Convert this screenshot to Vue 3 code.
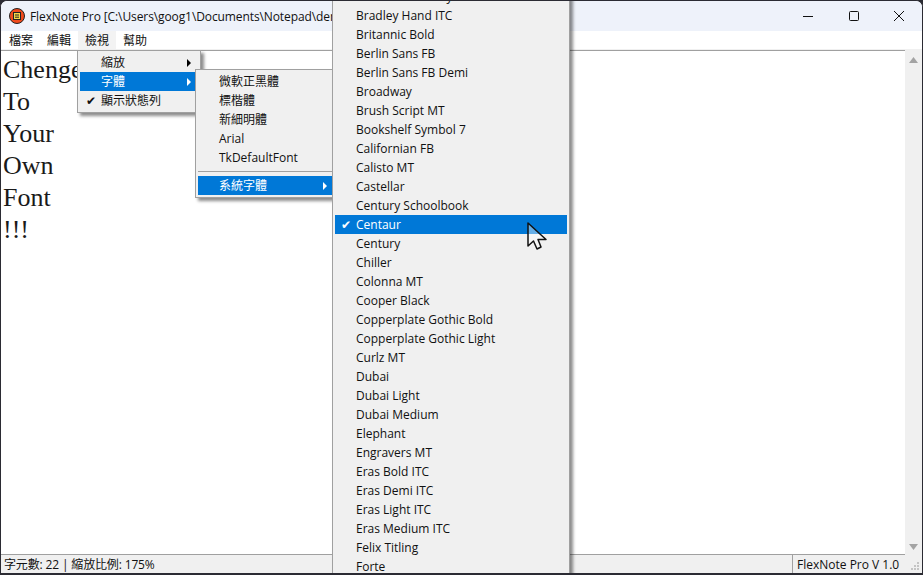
<script setup>
const menus = ['檔案', '編輯', '檢視', '幫助']
const lines = ['Chenge', 'To', 'Your', 'Own', 'Font', '!!!']
const subFonts = ['微軟正黑體', '標楷體', '新細明體', 'Arial', 'TkDefaultFont']
const fonts = ['Bookman Old Style', 'Bradley Hand ITC', 'Britannic Bold', 'Berlin Sans FB', 'Berlin Sans FB Demi', 'Broadway', 'Brush Script MT', 'Bookshelf Symbol 7', 'Californian FB', 'Calisto MT', 'Castellar', 'Century Schoolbook', 'Centaur', 'Century', 'Chiller', 'Colonna MT', 'Cooper Black', 'Copperplate Gothic Bold', 'Copperplate Gothic Light', 'Curlz MT', 'Dubai', 'Dubai Light', 'Dubai Medium', 'Elephant', 'Engravers MT', 'Eras Bold ITC', 'Eras Demi ITC', 'Eras Light ITC', 'Eras Medium ITC', 'Felix Titling', 'Forte']
</script>

<template>
  <div class="win">
    <header class="title">
      <svg class="logo" width="16" height="16" viewBox="0 0 16 16">
        <circle cx="8" cy="8" r="7.500" fill="#f04a1c" stroke="#222" />
        <rect x="4.500" y="4.500" width="7" height="7" fill="#f6d84a" stroke="#222" />
        <path d="M6 7h4M6 9.200h4" stroke="#222" />
      </svg>
      <span class="title-text">FlexNote Pro [C:\Users\goog1\Documents\Notepad\demo.txt]</span>
      <div class="caps">
        <svg width="12" height="12" viewBox="0 0 12 12"><path d="M1 6.500h10" stroke="#111" /></svg>
        <svg width="12" height="12" viewBox="0 0 12 12"><rect x="1.500" y="1.500" width="9" height="9" rx="1" fill="none" stroke="#111" /></svg>
        <svg width="12" height="12" viewBox="0 0 12 12"><path d="M1 1l10 10M11 1L1 11" stroke="#111" /></svg>
      </div>
    </header>
    <nav class="menubar">
      <span v-for="(m, i) in menus" :key="m" class="top" :class="{ open: i === 2 }">{{ m }}</span>
    </nav>
    <main class="body">
      <div class="editor">
        <div v-for="l in lines" :key="l" class="line">{{ l }}</div>
      </div>
      <div class="scroll">
        <svg width="9" height="6" viewBox="0 0 9 6"><path d="M4.500 0L9 6H0z" fill="#a3a3a3" /></svg>
        <svg width="9" height="6" viewBox="0 0 9 6"><path d="M0 0h9L4.500 6z" fill="#a3a3a3" /></svg>
      </div>
    </main>
    <footer class="status">
      <span class="stat-left">字元數: 22 | 縮放比例: 175%</span>
      <span class="stat-right">FlexNote Pro V 1.0</span>
      <svg class="grip" width="17" height="18" viewBox="0 0 17 18">
        <path d="M12 8h2v2h-2zM9 11h2v2H9zM12 11h2v2h-2zM6 14h2v2H6zM9 14h2v2H9zM12 14h2v2h-2z" fill="#c4c4c4" />
      </svg>
    </footer>

    <div class="menu view-menu">
      <div class="item"><span class="label">縮放</span><i class="arrow"></i></div>
      <div class="item hot"><span class="label">字體</span><i class="arrow"></i></div>
      <div class="item"><span class="check">✔</span><span class="label">顯示狀態列</span></div>
    </div>
    <div class="menu font-menu">
      <div v-for="f in subFonts" :key="f" class="item"><span class="label">{{ f }}</span></div>
      <div class="sep"></div>
      <div class="item hot"><span class="label">系統字體</span><i class="arrow"></i></div>
    </div>
    <div class="menu sys-menu">
      <div v-for="f in fonts" :key="f" class="item" :class="{ hot: f === 'Centaur' }">
        <span v-if="f === 'Centaur'" class="check">✔</span>
        <span class="label">{{ f }}</span>
      </div>
    </div>
    <svg class="cursor" width="22" height="30" viewBox="0 0 22 30">
      <path d="M2 2V25L7.500 20L11 28L15 26L12 18.500H20Z" fill="#fff" fill-opacity="0.4" stroke="#111" stroke-width="1.500" stroke-linejoin="round" />
    </svg>
  </div>
</template>

<style>
html, body { background: #2b2b33; }
</style>

<style scoped>
.win {
  position: relative;
  width: 923px;
  height: 575px;
  overflow: hidden;
  display: flex;
  flex-direction: column;
  background: #fff;
  box-sizing: border-box;
  border: solid #2b2b33;
  border-width: 1px 1px 2px 1px;
  border-top-left-radius: 7px;
  border-top-right-radius: 7px;
  font: 12px "Open Sans", "Noto Sans CJK TC", sans-serif;
  color: #111;
}
.title {
  height: 30px;
  flex: none;
  display: flex;
  align-items: center;
  background: #eef2fa;
  padding-left: 8px;
}
.logo { flex: none; }
.title-text {
  margin-left: 5px;
  white-space: nowrap;
  letter-spacing: -0.1px;
}
.caps {
  margin-left: auto;
  display: flex;
  gap: 33.500px;
  padding-right: 17px;
}
.menubar {
  height: 18px;
  flex: none;
  display: flex;
  padding-left: 1px;
  background: #fff;
}
.top {
  padding: 1px 7px 0;
  line-height: 18px;
  height: 18px;
  box-sizing: border-box;
}
.top.open { background: #f3f3f3; }
.body {
  flex: 1;
  display: flex;
  min-height: 0;
  background: #fff;
  border-top: 1px solid #f0f0f0;
}
.editor {
  flex: 1;
  border-top: 1px solid #a0a0a0;
  padding: 3px 0 0 2px;
  font: 26px/32px "Liberation Serif", serif;
  color: #1a1a1a;
}
.line { height: 32px; }
.scroll {
  width: 17px;
  flex: none;
  background: #f0f0f0;
  display: flex;
  flex-direction: column;
  justify-content: space-between;
  align-items: center;
  padding: 7px 0 4px;
  box-sizing: border-box;
}
.status {
  position: relative;
  height: 19px;
  flex: none;
  display: flex;
  background: #f0f0f0;
  padding-right: 17px;
  line-height: 20px;
}
.stat-left {
  flex: 1;
  border-top: 1px solid #a0a0a0;
  border-right: 1px solid #a0a0a0;
  padding-left: 3px;
  letter-spacing: -0.15px;
}
.stat-right {
  width: 112px;
  flex: none;
  box-sizing: border-box;
  border-top: 1px solid #a0a0a0;
  padding-left: 4px;
  white-space: nowrap;
}
.grip {
  position: absolute;
  right: 0;
  top: 0;
}
.menu {
  position: absolute;
  box-sizing: border-box;
  background: #f0f0f0;
  border: 1px solid #a0a0a0;
  padding: 2px;
  box-shadow: 3px 3px 3px rgba(0, 0, 0, 0.45);
}
.view-menu { left: 76px; top: 49px; width: 124px; }
.font-menu { left: 194px; top: 68px; width: 142px; }
.sys-menu { left: 331px; top: -17px; width: 238px; }
.item {
  position: relative;
  height: 19px;
  line-height: 19px;
  white-space: nowrap;
}
.label { position: absolute; left: 21px; top: 0; }
.hot { background: #0078d7; color: #fff; }
.check {
  position: absolute;
  left: 6px;
  top: 0;
  font-size: 12px;
}
.arrow {
  position: absolute;
  right: 7px;
  top: 6px;
  border-left: 4px solid #000;
  border-top: 4px solid transparent;
  border-bottom: 4px solid transparent;
}
.hot .arrow { border-left-color: #fff; }
.sep {
  height: 1px;
  background: #a0a0a0;
  margin: 4px 0 4px 0;
}
.cursor {
  position: absolute;
  left: 525px;
  top: 220px;
}
</style>
